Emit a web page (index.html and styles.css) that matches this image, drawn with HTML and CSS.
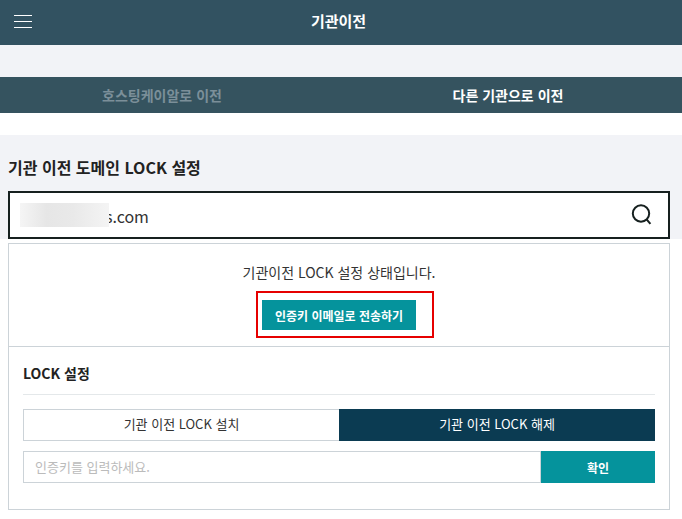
FILE: index.html
```html
<!DOCTYPE html>
<html lang="ko">
<head>
<meta charset="utf-8">
<title>기관이전</title>
<link rel="stylesheet" href="styles.css">
</head>
<body>
<header class="topbar">
  <button class="menu" aria-label="메뉴"><span></span><span></span><span></span></button>
  <h1 class="topbar-title">기관이전</h1>
</header>
<div class="band"></div>
<nav class="tabs">
  <div class="tab tab-dim">호스팅케이알로 이전</div>
  <div class="tab tab-on">다른 기관으로 이전</div>
</nav>
<section class="domain">
  <h2 class="domain-title">기관 이전 도메인 LOCK 설정</h2>
  <div class="search">
    <span class="search-value"><span class="mask"></span><span class="domain-text">s.com</span></span>
    <svg class="search-icon" width="22" height="22" viewBox="0 0 22 22" fill="none" stroke="#16201f" stroke-width="2"><circle cx="10" cy="9.5" r="8.2"/><path d="M15.6 15.3 19.4 19.8"/></svg>
  </div>
</section>
<section class="card">
  <div class="status">
    <p class="status-text">기관이전 LOCK 설정 상태입니다.</p>
    <div class="highlight"><button class="send">인증키 이메일로 전송하기</button></div>
  </div>
  <div class="lock">
    <h3 class="lock-title">LOCK 설정</h3>
    <div class="segments">
      <div class="segment">기관 이전 LOCK 설치</div>
      <div class="segment segment-on">기관 이전 LOCK 해제</div>
    </div>
    <div class="confirm-row">
      <div class="key-input">인증키를 입력하세요.</div>
      <button class="confirm">확인</button>
    </div>
  </div>
</section>
</body>
</html>
```

FILE: styles.css
```css
* { box-sizing: border-box; }
html, body { margin: 0; padding: 0; }
body {
  background: #fff;
  font-family: "Noto Sans CJK KR", "Noto Sans", sans-serif;
  color: #222;
  overflow: hidden;
}
button { font-family: inherit; border: 0; padding: 0; }
h1, h2, h3, p { margin: 0; }

.topbar {
  height: 45px;
  background: #325261;
  display: flex;
  align-items: center;
  justify-content: center;
  position: relative;
}
.menu {
  position: absolute;
  left: 14px;
  top: 15px;
  width: 18px;
  height: 13px;
  background: none;
  display: flex;
  flex-direction: column;
  justify-content: space-between;
}
.menu span { display: block; height: 1px; background: #fff; }
.topbar-title { font-size: 15px; font-weight: 700; color: #fff; line-height: 20px; margin-top: -3px; padding-right: 5px; }

.band { height: 32px; background: #f2f3f7; }

.tabs { height: 36px; background: #35535f; display: flex; }
.tab {
  width: 50%;
  text-align: center;
  font-size: 14px;
  font-weight: 700;
  line-height: 37px;
}
.tab-dim { color: #7b8f99; padding-right: 17px; }
.tab-on { color: #fff; padding-right: 7px; }

.domain {
  margin-top: 22px;
  height: 104px;
  background: #f2f3f7;
  padding: 0 12px 0 8px;
}
.domain-title {
  font-size: 16px;
  font-weight: 700;
  line-height: 22px;
  padding-top: 21px;
  height: 56px;
  color: #222;
}
.search {
  height: 48px;
  background: #fff;
  border: 2px solid #16201f;
  display: flex;
  align-items: center;
  justify-content: space-between;
  padding: 0 15px 0 10px;
}
.search-value {
  font-size: 16px;
  line-height: 24px;
  color: #333;
  display: flex;
  align-items: center;
}
.domain-text { padding-top: 2px; letter-spacing: -0.1px; }
.mask {
  width: 89px;
  height: 24px;
  margin-right: -4px;
  position: relative;
  background: linear-gradient(90deg, #f5f5f5 0%, #e6e6e6 30%, #e9e9e9 60%, #f4f4f4 100%);
}
.search-icon { display: block; }

.card {
  margin: 4px 12px 0 8px;
  height: 267px;
  border: 1px solid #ccd3d8;
}
.status {
  height: 103px;
  border-bottom: 1px solid #ccd3d8;
  display: flex;
  flex-direction: column;
  align-items: center;
}
.status-text {
  font-size: 14px;
  line-height: 20px;
  padding-top: 18px;
  height: 47px;
  color: #333;
}
.highlight {
  width: 178px;
  height: 47px;
  border: 2px solid #e60000;
  padding: 7px 4px 0;
  margin-left: 12px;
}
.send {
  display: block;
  width: 154px;
  height: 30px;
  background: #05939c;
  color: #fff;
  font-size: 12px;
  font-weight: 700;
}
.lock { padding: 0 14px; }
.lock-title {
  font-size: 14px;
  font-weight: 700;
  line-height: 20px;
  height: 48px;
  padding-top: 16px;
  border-bottom: 1px solid #e4e8ea;
  color: #222;
}
.segments { display: flex; margin-top: 14px; height: 32px; }
.segment {
  width: 50%;
  border: 1px solid #ccd3d8;
  border-right: 0;
  font-size: 13px;
  line-height: 28px;
  text-align: center;
  color: #333;
}
.segment-on {
  background: #0b3b52;
  border: 0;
  color: #fff;
  line-height: 30px;
}
.confirm-row { display: flex; margin-top: 10px; height: 32px; }
.key-input {
  flex: 1;
  border: 1px solid #ccd3d8;
  font-size: 13px;
  line-height: 29px;
  padding-left: 11px;
  color: #bbb;
}
.confirm {
  width: 114px;
  background: #05939c;
  color: #fff;
  font-size: 12px;
  font-weight: 700;
}
```
